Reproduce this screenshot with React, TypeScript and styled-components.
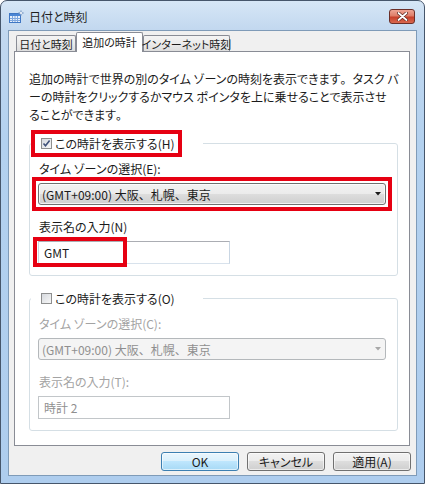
import React from 'react';
import styled, { createGlobalStyle } from 'styled-components';

const GlobalStyle = createGlobalStyle`
  html, body {
    margin: 0;
    padding: 0;
    background: #ffffff;
  }
  body {
    font-family: "Noto Sans CJK JP", "Noto Sans", sans-serif;
    font-size: 12px;
    font-feature-settings: "palt";
    color: #1b1b1b;
  }
`;

const Window = styled.div`
  width: 425px;
  height: 484px;
  box-sizing: border-box;
  border: 1px solid #46566b;
  border-radius: 7px 7px 0 0;
  background: linear-gradient(180deg, #d6e6f6 0px, #c2d8ef 29px, #b3d1ef 140px, #aecdee 100%);
  display: flex;
  flex-direction: column;
  overflow: hidden;
`;

const TitleBar = styled.div`
  height: 29px;
  flex-shrink: 0;
  display: flex;
  align-items: center;
  padding: 1px 9px 0 8px;
  box-sizing: border-box;
`;

const Title = styled.span`
  margin-left: 5px;
  font-size: 12px;
  color: #1e1e1e;
`;

const CloseButton = styled.div`
  margin-left: auto;
  width: 26px;
  height: 15px;
  box-sizing: border-box;
  border: 1px solid #6b2f28;
  border-radius: 3px;
  background: linear-gradient(180deg, #eea595 0%, #de7d68 45%, #c8402b 55%, #d8684f 100%);
  display: flex;
  align-items: center;
  justify-content: center;
`;

const Client = styled.div`
  flex: 1;
  margin: 0 7px 7px;
  border: 1px solid #7f9bb8;
  background: #f0f0f0;
  display: flex;
  flex-direction: column;
`;

const TabStrip = styled.div`
  display: flex;
  align-items: flex-end;
  padding: 1px 0 0 7px;
  margin-bottom: -1px;
  position: relative;
  z-index: 1;
`;

const Tab = styled.div<{ $active?: boolean; $w: number }>`
  box-sizing: border-box;
  width: ${({ $w }) => $w}px;
  height: ${({ $active }) => ($active ? 20 : 16)}px;
  margin-bottom: ${({ $active }) => ($active ? 0 : 1)}px;
  border: 1px solid #898c95;
  border-bottom: none;
  border-radius: 2px 2px 0 0;
  background: ${({ $active }) =>
    $active ? '#ffffff' : 'linear-gradient(180deg, #f4f4f4 0%, #ebebeb 50%, #dddddd 100%)'};
  display: flex;
  align-items: center;
  justify-content: center;
  padding-bottom: ${({ $active }) => ($active ? 2 : 0)}px;
  white-space: nowrap;
  font-size: 11px;
  color: #1b1b1b;
`;

const Panel = styled.div`
  margin-left: 5px;
  width: 396px;
  height: 395px;
  box-sizing: border-box;
  border: 1px solid #898c95;
  background: #ffffff;
  padding: 18px 11px 0 14px;
`;

const Intro = styled.p`
  margin: 0;
  line-height: 18px;
  white-space: nowrap;
`;

// full-width punctuation keeps its full advance, as in the original font
const Punct = styled.span`
  font-feature-settings: normal;
`;

const Group = styled.fieldset<{ $gap: number }>`
  margin: ${({ $gap }) => $gap}px 0 0;
  padding: 0 5px 11px 2px;
  border: 1px solid #d5dfe5;
  border-radius: 3px;
  min-width: 0;
`;

const Legend = styled.legend`
  padding: 0 21px 0 0;
  margin-left: -1px;
`;

const Mark = styled.div<{ $on?: boolean }>`
  border: 4px solid ${({ $on }) => ($on ? '#e60012' : 'transparent')};
`;

const CheckLabel = styled.label`
  height: 19px;
  display: flex;
  align-items: center;
  padding: 0 3px 0 6px;
  white-space: nowrap;
  color: #1b1b1b;
`;

const CheckBox = styled.span`
  width: 11px;
  height: 11px;
  box-sizing: border-box;
  border: 1px solid #8e8f8f;
  background: linear-gradient(135deg, #d6d9de 0%, #f7f7f7 100%);
  display: inline-flex;
  align-items: center;
  justify-content: center;
  margin-right: 3px;
`;

const FieldLabel = styled.div<{ $disabled?: boolean; $top: number }>`
  margin-top: ${({ $top }) => $top}px;
  padding-left: 7px;
  line-height: 16px;
  color: ${({ $disabled }) => ($disabled ? '#a3a3a3' : '#1b1b1b')};
  white-space: nowrap;
`;

const SelectFrame = styled(Mark)`
  padding: 2px;
`;

const Select = styled.div<{ $disabled?: boolean }>`
  height: 22px;
  box-sizing: border-box;
  border: 1px solid ${({ $disabled }) => ($disabled ? '#b4b8bb' : '#707070')};
  border-radius: 3px;
  background: ${({ $disabled }) =>
    $disabled
      ? '#f4f4f4'
      : 'linear-gradient(180deg, #f2f2f2 0%, #ebebeb 50%, #dddddd 50%, #cfcfcf 100%)'};
  box-shadow: ${({ $disabled }) => ($disabled ? 'none' : 'inset 0 0 0 1px rgba(255,255,255,0.7)')};
  display: flex;
  align-items: center;
  padding: 0 4px 0 3px;
  color: ${({ $disabled }) => ($disabled ? '#8f8f8f' : '#1b1b1b')};
  white-space: nowrap;
`;

const SelectText = styled.span`
  flex: 1;
`;

const InputWrap = styled.div`
  position: relative;
  margin: 6px 0 0 6px;
  width: 192px;
`;

const Input = styled.div<{ $disabled?: boolean }>`
  height: 23px;
  box-sizing: border-box;
  border: 1px solid;
  border-color: ${({ $disabled }) =>
    $disabled ? '#c2c6c9' : '#abadb3 #c9d6e3 #d8e2ec #c9d6e3'};
  background: #ffffff;
  display: flex;
  align-items: center;
  padding-left: 5px;
  color: ${({ $disabled }) => ($disabled ? '#8f8f8f' : '#1b1b1b')};
`;

const InputMark = styled.div`
  position: absolute;
  left: -5px;
  top: -4px;
  width: 94px;
  height: 30px;
  box-sizing: border-box;
  border: 4px solid #e60012;
  pointer-events: none;
`;

const ButtonRow = styled.div`
  display: flex;
  justify-content: flex-end;
  gap: 8px;
  margin-top: 6px;
  padding-right: 5px;
`;

const Button = styled.div<{ $default?: boolean }>`
  width: 78px;
  height: 19px;
  box-sizing: border-box;
  border: 1px solid ${({ $default }) => ($default ? '#3c7fb1' : '#707070')};
  border-radius: 3px;
  background: ${({ $default }) =>
    $default
      ? 'linear-gradient(180deg, #eaf6fd 0%, #d9f0fc 50%, #bee6fd 50%, #a7d9f5 100%)'
      : 'linear-gradient(180deg, #f2f2f2 0%, #ebebeb 50%, #dddddd 50%, #cfcfcf 100%)'};
  box-shadow: inset 0 0 0 1px rgba(255, 255, 255, 0.6);
  display: flex;
  align-items: center;
  justify-content: center;
  color: #1b1b1b;
  white-space: nowrap;
`;

const AppIcon = () => (
  <svg width="15" height="13" viewBox="0 0 15 13">
    <rect x="0.5" y="3.5" width="11" height="9" fill="#e9f1fb" stroke="#3f77c4" />
    <rect x="1" y="4" width="10" height="2" fill="#4b86d4" />
    <path d="M3.5 6v6M6 6v6M8.5 6v6M1 8.5h10M1 10.5h10" stroke="#7ea7de" strokeWidth="1" />
    <path d="M12 0.5l0.8 1.8 1.8 0.7-1.8 0.7-0.8 1.8-0.8-1.8-1.8-0.7 1.8-0.7z" fill="#ffffff" stroke="#6a8fc0" strokeWidth="0.6" />
  </svg>
);

const CloseGlyph = () => (
  <svg width="11" height="9" viewBox="0 0 11 9">
    <path d="M1.5 1l8 7M9.5 1l-8 7" stroke="#5a231b" strokeWidth="3.2" strokeLinecap="round" />
    <path d="M1.5 1l8 7M9.5 1l-8 7" stroke="#ffffff" strokeWidth="1.8" strokeLinecap="round" />
  </svg>
);

const CheckGlyph = () => (
  <svg width="9" height="9" viewBox="0 0 9 9">
    <path d="M1.5 4.5l2 2.2L7.6 1.6" fill="none" stroke="#40527a" strokeWidth="1.6" />
  </svg>
);

const Arrow = ({ color }: { color: string }) => (
  <svg width="6" height="4" viewBox="0 0 6 4">
    <path d="M0 0h6L3 3.5z" fill={color} />
  </svg>
);

interface ClockGroupProps {
  checked: boolean;
  marked: boolean;
  checkText: string;
  zoneLabel: string;
  nameLabel: string;
  name: string;
  gap: number;
}

const ClockGroup: React.FC<ClockGroupProps> = ({ checked, marked, checkText, zoneLabel, nameLabel, name, gap }) => {
  const disabled = !checked;
  return (
    <Group $gap={gap}>
      <Legend>
        <Mark $on={marked}>
          <CheckLabel>
            <CheckBox>{checked && <CheckGlyph />}</CheckBox>
            {checkText}
          </CheckLabel>
        </Mark>
      </Legend>
      <FieldLabel $top={4} $disabled={disabled}>{zoneLabel}</FieldLabel>
      <SelectFrame $on={marked}>
        <Select $disabled={disabled}>
          <SelectText>
            (GMT+09:00) 大阪<Punct>、</Punct>札幌<Punct>、</Punct>東京
          </SelectText>
          <Arrow color={disabled ? '#a8a8a8' : '#1b1b1b'} />
        </Select>
      </SelectFrame>
      <FieldLabel $top={8} $disabled={disabled}>{nameLabel}</FieldLabel>
      <InputWrap>
        <Input $disabled={disabled}>{name}</Input>
        {marked && <InputMark />}
      </InputWrap>
    </Group>
  );
};

export default function App() {
  return (
    <>
      <GlobalStyle />
      <Window>
        <TitleBar>
          <AppIcon />
          <Title>日付と時刻</Title>
          <CloseButton>
            <CloseGlyph />
          </CloseButton>
        </TitleBar>
        <Client>
          <TabStrip>
            <Tab $w={60}>日付と時刻</Tab>
            <Tab $w={67} $active>追加の時計</Tab>
            <Tab $w={87}>インターネット時刻</Tab>
          </TabStrip>
          <Panel>
            <Intro>
              追加の時計で世界の別のタイム ゾーンの時刻を表示できます<Punct>。</Punct>タスク バ
              <br />
              ーの時計をクリックするかマウス ポインタを上に乗せることで表示させ
              <br />
              ることができます<Punct>。</Punct>
            </Intro>
            <ClockGroup
              gap={6}
              checked
              marked
              checkText="この時計を表示する(H)"
              zoneLabel="タイム ゾーンの選択(E):"
              nameLabel="表示名の入力(N)"
              name="GMT"
            />
            <ClockGroup
              gap={9}
              checked={false}
              marked={false}
              checkText="この時計を表示する(O)"
              zoneLabel="タイム ゾーンの選択(C):"
              nameLabel="表示名の入力(T):"
              name="時計 2"
            />
          </Panel>
          <ButtonRow>
            <Button $default>OK</Button>
            <Button>キャンセル</Button>
            <Button>適用(A)</Button>
          </ButtonRow>
        </Client>
      </Window>
    </>
  );
}
